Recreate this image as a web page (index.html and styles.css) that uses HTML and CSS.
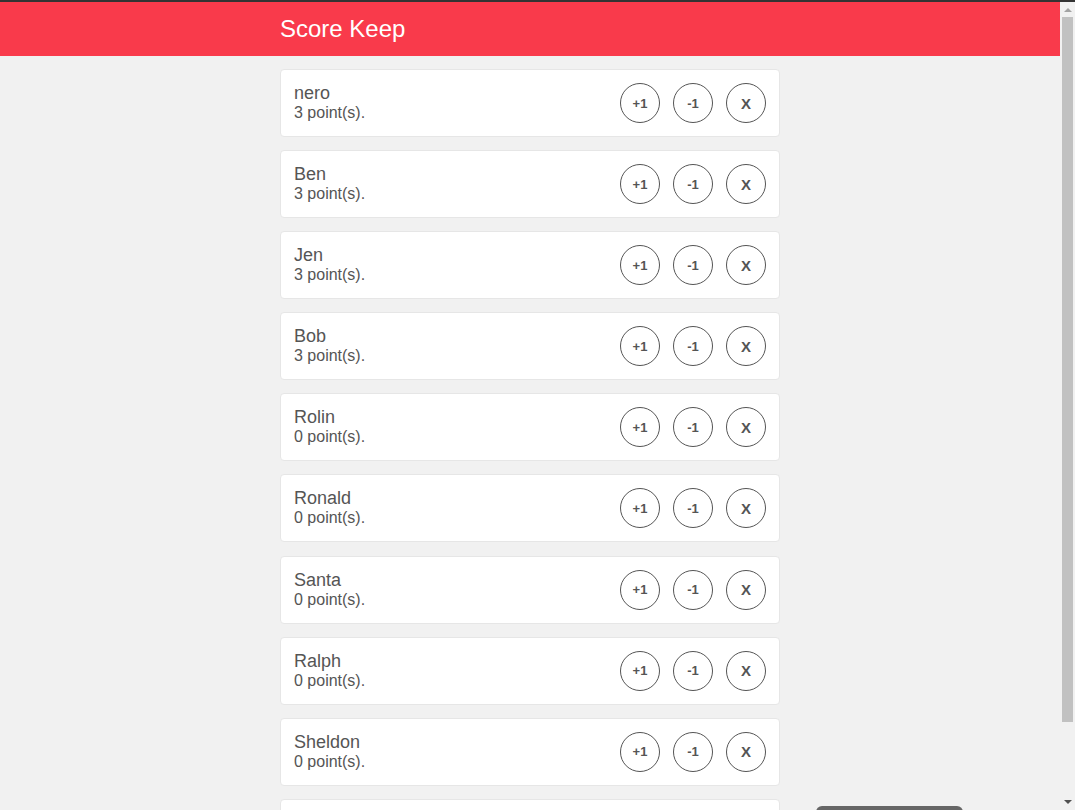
FILE: index.html
```html
<!DOCTYPE html>
<html lang="en">
<head>
<meta charset="utf-8">
<title>Score Keep</title>
<link rel="stylesheet" href="styles.css">
</head>
<body>
<header class="topbar">
  <div class="wrap"><h1 class="title">Score Keep</h1></div>
</header>
<main class="wrap list">
  <div class="card"><div class="info"><div class="name">nero</div><div class="pts">3 point(s).</div></div><div class="actions"><button class="btn">+1</button><button class="btn">-1</button><button class="btn x">X</button></div></div>
  <div class="card"><div class="info"><div class="name">Ben</div><div class="pts">3 point(s).</div></div><div class="actions"><button class="btn">+1</button><button class="btn">-1</button><button class="btn x">X</button></div></div>
  <div class="card"><div class="info"><div class="name">Jen</div><div class="pts">3 point(s).</div></div><div class="actions"><button class="btn">+1</button><button class="btn">-1</button><button class="btn x">X</button></div></div>
  <div class="card"><div class="info"><div class="name">Bob</div><div class="pts">3 point(s).</div></div><div class="actions"><button class="btn">+1</button><button class="btn">-1</button><button class="btn x">X</button></div></div>
  <div class="card"><div class="info"><div class="name">Rolin</div><div class="pts">0 point(s).</div></div><div class="actions"><button class="btn">+1</button><button class="btn">-1</button><button class="btn x">X</button></div></div>
  <div class="card"><div class="info"><div class="name">Ronald</div><div class="pts">0 point(s).</div></div><div class="actions"><button class="btn">+1</button><button class="btn">-1</button><button class="btn x">X</button></div></div>
  <div class="card"><div class="info"><div class="name">Santa</div><div class="pts">0 point(s).</div></div><div class="actions"><button class="btn">+1</button><button class="btn">-1</button><button class="btn x">X</button></div></div>
  <div class="card"><div class="info"><div class="name">Ralph</div><div class="pts">0 point(s).</div></div><div class="actions"><button class="btn">+1</button><button class="btn">-1</button><button class="btn x">X</button></div></div>
  <div class="card"><div class="info"><div class="name">Sheldon</div><div class="pts">0 point(s).</div></div><div class="actions"><button class="btn">+1</button><button class="btn">-1</button><button class="btn x">X</button></div></div>
  <div class="card"><div class="info"><div class="name">Penny</div><div class="pts">0 point(s).</div></div><div class="actions"><button class="btn">+1</button><button class="btn">-1</button><button class="btn x">X</button></div></div>
</main>
<div class="toast"></div>
<div class="scrollbar">
  <span class="arrow up"></span>
  <span class="thumb"></span>
  <span class="arrow down"></span>
</div>
</body>
</html>
```
FILE: styles.css
```css
html {
  margin: 0;
  padding: 0;
  border-top: 2px solid #333;
  background: #f1f1f1;
}
body {
  margin: 0 15px 0 0;
  padding: 0;
  background: #f1f1f1;
  font-family: "Liberation Sans", Arial, sans-serif;
  color: #555;
}
.wrap {
  width: 500px;
  margin: 0 auto;
}
.topbar {
  background: #f93a4b;
  height: 54px;
  display: flex;
  align-items: center;
}
.title {
  margin: 0;
  font-weight: normal;
  font-size: 24px;
  color: #fff;
  line-height: 1;
}
.list {
  display: flex;
  flex-direction: column;
  gap: 13.1px;
  padding-top: 13px;
  padding-bottom: 13px;
}
.card {
  background: #fff;
  border: 1px solid #e6e6e6;
  border-radius: 4px;
  height: 66px;
  box-sizing: content-box;
  padding: 0 13px;
  display: flex;
  align-items: center;
  justify-content: space-between;
}
.name {
  font-size: 18px;
  line-height: 20px;
}
.pts {
  font-size: 16px;
  line-height: 20px;
}
.actions {
  display: flex;
  gap: 13px;
}
.btn {
  width: 40px;
  height: 40px;
  border-radius: 50%;
  border: 1px solid #555;
  background: #fff;
  color: #555;
  font-family: "Liberation Sans", Arial, sans-serif;
  font-weight: bold;
  font-size: 13px;
  padding: 0;
  display: flex;
  align-items: center;
  justify-content: center;
}
.btn.x {
  font-size: 15px;
}
.toast {
  position: fixed;
  left: 816px;
  top: 806px;
  width: 147px;
  height: 20px;
  background: #666;
  border-radius: 6px;
}
.scrollbar {
  position: fixed;
  top: 2px;
  right: 0;
  bottom: 0;
  width: 15px;
  background: #f1f1f1;
  display: flex;
  flex-direction: column;
  align-items: center;
}
.arrow {
  width: 0;
  height: 0;
  border-left: 4px solid transparent;
  border-right: 4px solid transparent;
}
.arrow.up {
  margin-top: 6px;
  border-bottom: 4px solid #a3a3a3;
}
.arrow.down {
  margin-top: auto;
  margin-bottom: 6px;
  border-top: 4px solid #505050;
}
.thumb {
  margin-top: 5px;
  width: 11px;
  height: 705px;
  background: #c1c1c1;
}
```
